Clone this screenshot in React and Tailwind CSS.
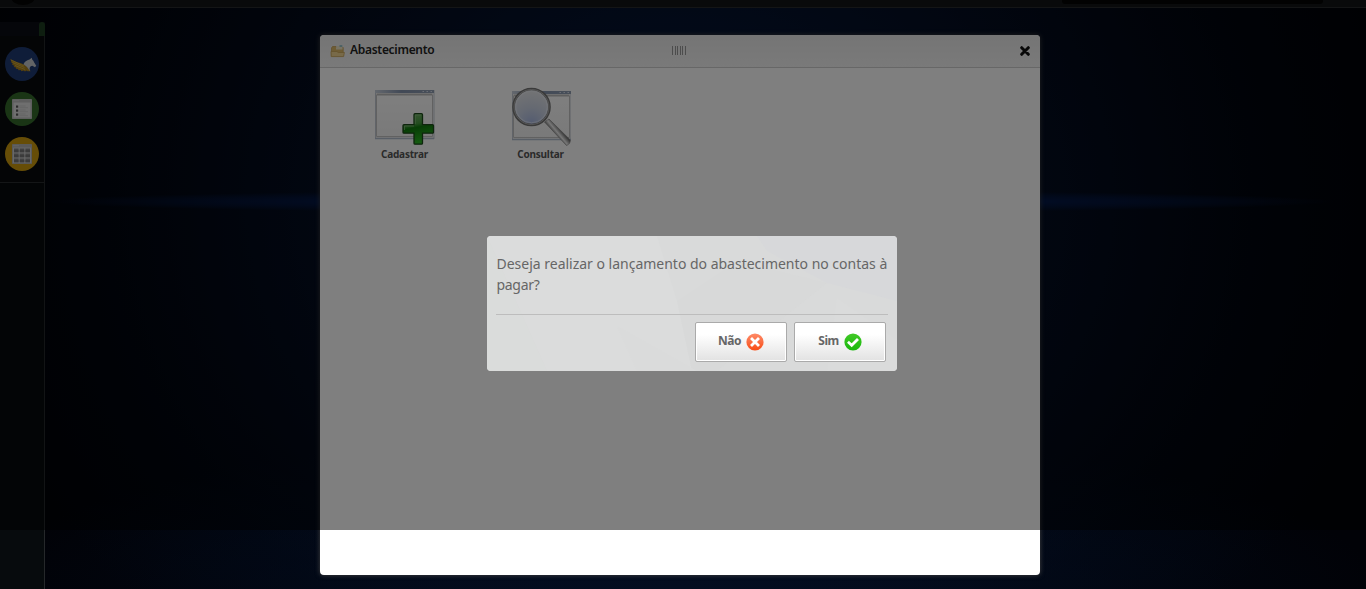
import React from "react";

function HorseIcon() {
  return (
    <svg width="34" height="34" viewBox="0 0 34 34">
      <circle cx="17" cy="17" r="17" fill="#1f3a72" />
      <path d="M5 12 Q11 15 16 16.300 Q20 17.500 22 19.500 L25.700 24.200 L22.500 24.200 L21.500 23.600 L20 24.500 L18.500 23.400 L16.500 24.200 L15.700 22.900 L13.500 23.300 L13 21.900 L10.800 21.800 L11 20.500 L8.800 19.900 L9.300 18.700 L7 17.500 L7.700 16.500 L5.800 15 L6.400 14.200Z" fill="#a8811f" />
      <path d="M6 13l13 6M7.500 15.500l12 5M10 18.500l10 4" stroke="#dcb643" strokeWidth=".7" />
      <path d="M18.500 17.300 Q20 13.500 24.500 12.500 L26.700 10.800 L27.300 12.700 Q28.500 13.500 29.200 15.500 L31.200 18.800 L30 20.200 L27.300 18.700 Q23.500 19.200 25 24.200 Q23 20 18.500 17.300Z" fill="#c5c8cc" />
    </svg>
  );
}

function ListIcon() {
  return (
    <svg width="34" height="34" viewBox="0 0 34 34">
      <circle cx="17" cy="17" r="17" fill="#346b2b" />
      <rect x="7" y="7" width="20" height="20" rx=".7" fill="#bcbcbc" />
      <rect x="8.500" y="10.500" width="17" height="15" fill="#dedede" />
      <path d="M8.500 8.700h1M10.500 8.700h1M12.500 8.700h1" stroke="#dadada" />
      {[14, 18, 22].map((y) => (
        <g key={y}>
          <rect x="11" y={y - 0.5} width="2.200" height="2.200" fill="#555" />
          <path d={`M14.500 ${y}h6M14.500 ${y + 1.7}h8.500`} stroke="#c6c6c6" strokeWidth=".8" />
        </g>
      ))}
    </svg>
  );
}

function TableIcon() {
  return (
    <svg width="34" height="34" viewBox="0 0 34 34">
      <circle cx="17" cy="17" r="17" fill="#cc9b0e" />
      <rect x="7" y="7" width="20" height="20" rx=".7" fill="#b2b2b2" />
      <rect x="8" y="10.500" width="18" height="15.500" fill="#d0d0d0" />
      <path d="M8.500 8.700h1M10.500 8.700h1M12.500 8.700h1" stroke="#dadada" />
      {[11.5, 16.5, 21.5].map((y) =>
        [9, 14.7, 20.4].map((x) => (
          <g key={`${x}-${y}`}>
            <rect x={x} y={y} width="4.600" height="4" fill="#858585" />
            <path d={`M${x} ${y + 2.5}h4.600`} stroke="#686868" strokeWidth="1" />
          </g>
        ))
      )}
    </svg>
  );
}

function FolderIcon() {
  return (
    <svg width="16" height="14" viewBox="0 0 16 14">
      <path d="M1.500 12V4L2.500 2.500H6l1 1h6.200V12z" fill="#dcb869" stroke="#c7a25a" strokeWidth=".8" />
      <path d="M6 3.700L7 2h5.500v3.500H6z" fill="#eee7cb" />
      <path d="M9.500 2h2.800" stroke="#4da0b4" />
      <path d="M1.200 12.600L1 7.500H7l1.200 1h6.200L13.600 12.600z" fill="#f0d592" stroke="#c9a559" strokeWidth=".8" />
    </svg>
  );
}

function WindowArt() {
  return (
    <g>
      <rect x=".5" y="3.500" width="58.500" height="48" fill="url(#sheet)" stroke="#c3c9d3" />
      <rect x="0" y="3" width="59" height="3" fill="url(#bar)" />
      <path d="M47.500 4.500h1.500M51.500 4.500h1.500M55.500 4.500h1.500" stroke="#d4dbe8" strokeWidth="1.200" />
      <path d="M1.500 7.500h56" stroke="#bcbcbc" strokeWidth="2" />
      <path d="M1.500 8v41.500h56V8" fill="none" stroke="#c2c2c2" />
      <path d="M0 51.500h59" stroke="#b0bccc" strokeWidth="1.500" />
    </g>
  );
}

function AddWindowIcon() {
  return (
    <svg width="60" height="60" viewBox="0 0 60 60">
      <defs>
        <linearGradient id="sheet" x2="0" y2="1"><stop stopColor="#fff" /><stop offset="1" stopColor="#f3f3f3" /></linearGradient>
        <linearGradient id="bar"><stop stopColor="#c8d0dc" /><stop offset=".45" stopColor="#8493ad" /><stop offset="1" stopColor="#919fb3" /></linearGradient>
        <linearGradient id="plus" x2=".2" y2="1"><stop stopColor="#78b56c" /><stop offset=".4" stopColor="#46993f" /><stop offset=".52" stopColor="#0f7a0c" /><stop offset="1" stopColor="#2bb522" /></linearGradient>
      </defs>
      <WindowArt />
      <path d="M40 26.700h6.500q1 0 1 1v10h10q1 0 1 1v6.500q0 1-1 1h-10v10q0 1-1 1H40q-1 0-1-1v-10H29q-1 0-1-1v-6.500q0-1 1-1h10v-10q0-1 1-1z" fill="url(#plus)" stroke="#1c4a1a" strokeWidth="1.300" />
      <path d="M40.300 37V28h5.900M29.500 43v-4h9.500" fill="none" stroke="#8cc084" strokeWidth=".7" />
    </svg>
  );
}

function SearchWindowIcon() {
  return (
    <svg width="60" height="60" viewBox="0 0 60 60">
      <defs>
        <radialGradient id="lens" cx=".5" cy=".95" r=".85"><stop stopColor="#a8b8e2" /><stop offset=".5" stopColor="#cbd3e4" /><stop offset="1" stopColor="#e3e5e9" /></radialGradient>
        <linearGradient id="handle" gradientUnits="userSpaceOnUse" x1="44" y1="48" x2="50" y2="43"><stop stopColor="#777" /><stop offset=".45" stopColor="#efefef" /><stop offset="1" stopColor="#6a6a6a" /></linearGradient>
      </defs>
      <g transform="translate(1 1)"><WindowArt /></g>
      <path d="M33.500 35L38 32 59.300 53Q59.500 57 55.500 58.500z" fill="url(#handle)" stroke="#808080" strokeWidth=".6" />
      <circle cx="20.500" cy="20" r="18" fill="url(#lens)" stroke="#747474" strokeWidth="2.600" />
      <circle cx="20.500" cy="20" r="17.500" fill="none" stroke="#bdbdbd" strokeWidth=".8" />
      <circle cx="20.500" cy="20" r="15.800" fill="none" stroke="#eef2fa" strokeWidth="1" opacity=".6" />
    </svg>
  );
}

function Shortcut({ label, children }) {
  return (
    <button className="flex w-[136px] flex-col items-center">
      {children}
      <span className="-mt-px mr-px h-4 text-[10px] leading-4 font-bold tracking-[-0.2px] whitespace-nowrap text-[#555]">{label}</span>
    </button>
  );
}

function StatusIcon({ ok }) {
  return (
    <svg width="18" height="18" viewBox="0 0 18 18">
      <defs>
        <linearGradient id="no" x2="0" y2="1"><stop stopColor="#ff8a67" /><stop offset=".5" stopColor="#fa6d42" /><stop offset="1" stopColor="#fa4a12" /></linearGradient>
        <linearGradient id="yes" x2="0" y2="1"><stop stopColor="#42c927" /><stop offset="1" stopColor="#18b80c" /></linearGradient>
      </defs>
      <circle cx="9" cy="9" r="8.600" fill={ok ? "url(#yes)" : "url(#no)"} />
      <path d={ok ? "M5 9.700L7.700 12.200 13 6.900" : "M6 6l6 6m0-6l-6 6"} fill="none" stroke="#fff" strokeWidth="2.800" strokeLinecap="square" />
    </svg>
  );
}

function DialogButton({ label, ok }) {
  return (
    <button className="flex h-10 w-[92px] items-center justify-center gap-[5px] rounded-[2px] border border-[#aaa] bg-linear-to-b from-white from-30% to-[#e2e2e2] pb-px shadow-[inset_0_0_0_1px_#fff]">
      <span className="-mt-px text-[12px] leading-4 font-bold tracking-[-0.5px] text-[#666]">{label}</span>
      <StatusIcon ok={ok} />
    </button>
  );
}

export default function App() {
  return (
    <div className="relative flex h-[589px] w-full flex-col overflow-hidden bg-[#010208] font-['Noto_Sans',sans-serif]">
      <div className="absolute inset-0 bg-[radial-gradient(ellipse_720px_620px_at_680px_200px,#061a42_0%,#05112a_35%,#030a1a_60%,#01050e_80%,#010207_100%)]" />
      <div className="absolute inset-0 bg-[radial-gradient(ellipse_700px_160px_at_680px_589px,#030d20,transparent)]" />
      <div className="absolute top-[190px] left-[45px] h-[23px] w-[1290px] bg-[radial-gradient(ellipse_50%_50%_at_center,#052c88_0%,#041f5c_40%,#04163f_60%,transparent_100%)]" />

      <header className="relative flex h-2 shrink-0 justify-between border-b border-[#292b2d] bg-[#131517] pr-[43px] pl-[11px]">
        <svg width="24" height="5" viewBox="0 0 24 5">
          <ellipse cx="12" cy="-3" rx="12" ry="8" fill="#050505" />
        </svg>
        <div className="h-1 w-[261px] rounded-b-[3px] bg-[#050505]" />
      </header>

      <aside className="relative mt-[14px] flex w-[45px] grow flex-col border-r border-[#25282a] bg-[#070b0d]">
        <div className="-mr-px flex h-[14px] justify-end bg-[#0a0c14]">
          <div className="w-1.5 rounded-t-[3px] bg-[#1d3d20]" />
        </div>
        <nav className="flex h-[147px] flex-col gap-[11px] border-b border-[#292c2e] bg-[#080a0c] pt-[11px] pl-[5px]">
          <HorseIcon />
          <ListIcon />
          <TableIcon />
        </nav>
      </aside>

      <section className="absolute top-[35px] left-[320px] flex h-[540px] w-[720px] flex-col overflow-hidden rounded bg-white shadow-[0_0_5px_#444]">
        <header className="flex h-[33px] items-center border-b border-[#cfcfcf] bg-linear-to-b from-[#eaeaea] to-[#f4f4f4] px-2.5">
          <div className="flex w-[342px] items-center gap-1">
            <FolderIcon />
            <h1 className="-mt-[3px] text-[12px] leading-4 font-semibold tracking-[-0.3px] whitespace-nowrap text-[#222]">Abastecimento</h1>
          </div>
          <div className="-mt-0.5 flex h-[9px] w-[14px] justify-between">
            {[0, 1, 2, 3, 4, 5].map((i) => (
              <span key={i} className="w-px bg-[#999]" />
            ))}
          </div>
          <div className="flex grow justify-end">
            <svg width="10" height="10" viewBox="0 0 10 10">
              <path d="M1.700 1.700l6.600 6.600m0-6.600l-6.600 6.600" stroke="#111" strokeWidth="3" strokeLinecap="round" />
            </svg>
          </div>
        </header>
        <div className="flex pt-[19px] pl-[17px]">
          <Shortcut label="Cadastrar"><AddWindowIcon /></Shortcut>
          <Shortcut label="Consultar"><SearchWindowIcon /></Shortcut>
        </div>
      </section>

      <div className="absolute inset-x-0 top-0 h-[530px] bg-black/50" />

      <div role="dialog" className="absolute top-[236px] left-[487px] flex h-[135px] w-[410px] flex-col overflow-hidden rounded bg-[#d9dada] px-[9px] pt-[17px]">
        <svg className="absolute inset-0" width="410" height="135" viewBox="0 0 410 135">
          <path d="M0 0h170l20 65 15 70H60z" fill="#dbdcdc" />
          <path d="M0 0l60 135H0z" fill="#dadcdb" />
          <path d="M270 0h140v65l-70-18-60-32z" fill="#d7d8da" />
          <path d="M190 65l60-40 90 22-110 88h-25z" fill="#d8d9d9" />
          <path d="M350 62l60 42v31h-70z" fill="#dadbdb" />
          <path d="M130 90l80 45h-60z" fill="#dadbdb" />
        </svg>
        <p className="relative h-[61px] w-[396px] text-[14px] leading-[21px] text-[#666]">
          <span className="block pl-[0.5px] tracking-[-0.01px] whitespace-nowrap">Deseja realizar o lançamento do abastecimento no contas à</span>
          <span className="block pl-[0.5px] tracking-[-0.3px]">pagar?</span>
        </p>
        <div className="relative flex justify-end gap-[7px] border-t border-[#bdbdbd] pt-[7px] pr-[2px]">
          <DialogButton label="Não" />
          <DialogButton label="Sim" ok />
        </div>
      </div>
    </div>
  );
}
